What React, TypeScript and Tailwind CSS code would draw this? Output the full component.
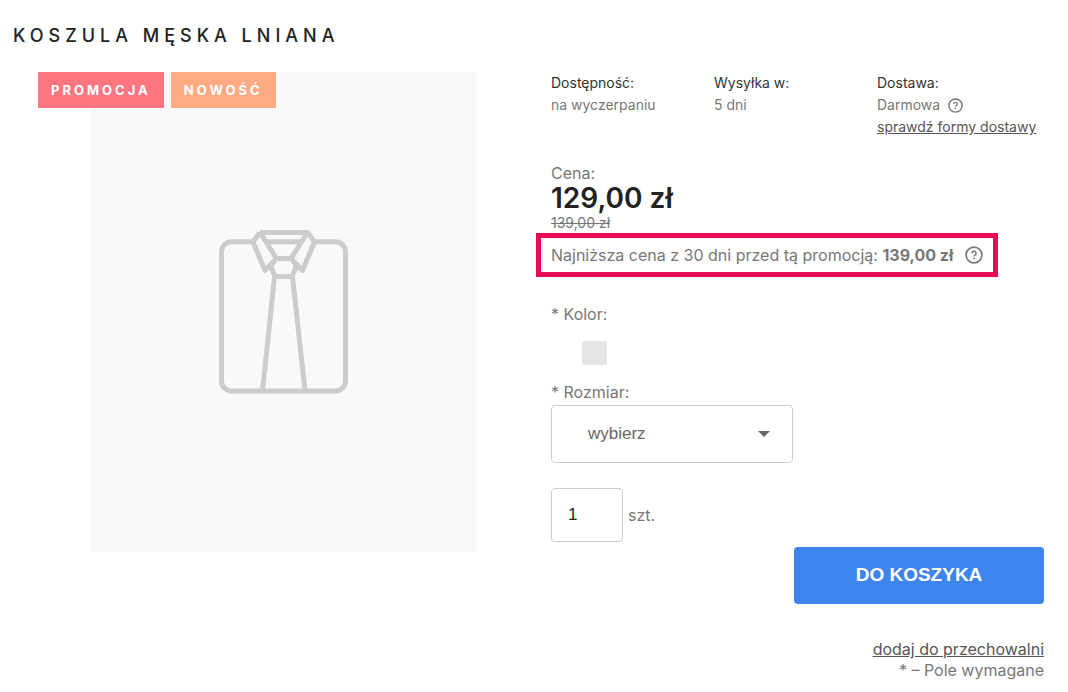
import type { ReactNode } from 'react';

function HelpIcon({ className }: { className: string }) {
  return (
    <svg viewBox="0 0 18 18" className={className} fill="none" stroke="currentColor" aria-hidden="true">
      <circle cx="9" cy="9" r="7.9" strokeWidth="1.7" />
      <path d="M6.9 7.3a2.1 2.1 0 1 1 3.3 1.7C9.4 9.5 9 9.7 9 10.6" strokeWidth="1.5" />
      <path d="M9 11.7v1.6" strokeWidth="1.6" />
    </svg>
  );
}

function ShirtIcon() {
  return (
    <svg viewBox="0 0 129 164" className="w-[129px] h-[164px]" fill="none" stroke="#cccccc" strokeWidth="5" strokeLinejoin="round" aria-hidden="true">
      <path d="M34 11.8H12.5a10 10 0 0 0-10 10V151a10 10 0 0 0 10 10h104a10 10 0 0 0 10-10V21.8a10 10 0 0 0-10-10H95" />
      <path d="M41 2.5H88.500L95.500 11.800 83.500 40.500 75 31.500 M41 2.500L34 11.800 46 40.500 54.500 31.500" />
      <path d="M41 2.500L57.500 28.500 M88.500 2.500L72 28.500 M47.500 11.800H82" />
      <path d="M57 28.500H72.500L77.500 36 73 46.500H56L51.500 36Z" />
      <path d="M55.500 46.500L43.500 161 M73.500 46.500L86 161" />
    </svg>
  );
}

function Info({ label, children }: { label: string; children: ReactNode }) {
  return (
    <div>
      <dt className="text-[#333333]">{label}</dt>
      <dd>{children}</dd>
    </div>
  );
}

export default function App() {
  return (
    <main className="min-h-screen bg-white pt-[21px] pb-2 pl-[13px] pr-6 font-['Inter',sans-serif] text-base text-[#777777]">
      <h1 className="text-lg leading-[30px] font-medium tracking-[5px] text-[#222222]">KOSZULA MĘSKA LNIANA</h1>

      <div className="mt-[21px] grid grid-cols-[538fr_493fr]">
        {/* Gallery */}
        <div className="relative pl-[3px]">
          <div className="mx-auto flex h-[480px] w-[385px] items-center justify-center bg-[#f9f9f9]">
            <ShirtIcon />
          </div>
          <div className="absolute top-0 left-[25px] flex gap-[7px] text-[13px] leading-9 font-bold tracking-[3px] text-white">
            <span className="bg-[#ff7681] px-[13px]">PROMOCJA</span>
            <span className="bg-[#ffaa82] px-[13px]">NOWOŚĆ</span>
          </div>
        </div>

        {/* Product details */}
        <div>
          <dl className="mr-1 grid grid-cols-3 text-sm leading-[22px] whitespace-nowrap">
            <Info label="Dostępność:">na wyczerpaniu</Info>
            <Info label="Wysyłka w:">5 dni</Info>
            <Info label="Dostawa:">
              <span className="flex items-center gap-2">
                Darmowa
                <button type="button" aria-label="Informacje o dostawie">
                  <HelpIcon className="size-[15px]" />
                </button>
              </span>
              <a href="#dostawa" className="text-[#555555] underline">sprawdź formy dostawy</a>
            </Info>
          </dl>

          <div className="mt-[25px] leading-5">Cena:</div>
          <div className="text-[28px] leading-[30px] font-semibold text-[#222222]">129,00 zł</div>
          <del className="block text-sm leading-5">139,00 zł</del>
          <div className="-ml-[15px] flex h-11 w-fit items-center gap-3 border-5 border-[#e60b55] px-2.5 whitespace-nowrap">
            <span>Najniższa cena z 30 dni przed tą promocją: <strong className="font-bold">139,00 zł</strong></span>
            <button type="button" aria-label="Informacje o cenie">
              <HelpIcon className="size-[18px]" />
            </button>
          </div>

          <form>
            <div id="color-label" className="mt-[25px] leading-6">* Kolor:</div>
            <button type="button" aria-labelledby="color-label" className="mt-[15px] ml-[31px] block h-6 w-[25px] rounded-xs bg-[#e5e5e5]" />

            <label htmlFor="size" className="mt-[15px] block leading-6">* Rozmiar:</label>
            <div className="relative mt-px w-[242px]">
              <select id="size" className="h-[58px] w-full appearance-none rounded border border-[#cccccc] bg-white pl-9 font-['Liberation_Sans',sans-serif] text-[17px] text-[#666666]">
                <option>wybierz</option>
              </select>
              <svg viewBox="0 0 12 6" className="pointer-events-none absolute top-[26px] right-[23px] h-1.5 w-3" fill="#666666" aria-hidden="true">
                <path d="M0 0h12L6 6z" />
              </svg>
            </div>

            <div className="mt-[25px] flex items-center gap-[5px]">
              <input id="quantity" type="text" defaultValue="1" className="h-[54px] w-[72px] rounded border border-[#cccccc] px-4 font-['Liberation_Sans',sans-serif] text-[17px] text-[#222222]" />
              <label htmlFor="quantity">szt.</label>
            </div>

            <button type="submit" className="mt-[5px] ml-auto block h-[57px] w-[250px] rounded bg-[#3d84ec] font-['Liberation_Sans',sans-serif] text-[19px] font-bold text-white">
              DO KOSZYKA
            </button>
          </form>

          <div className="mt-[35px] text-right leading-[21px]">
            <a href="#przechowalnia" className="text-[#555555] underline">dodaj do przechowalni</a>
            <p>* – Pole wymagane</p>
          </div>
        </div>
      </div>
    </main>
  );
}
